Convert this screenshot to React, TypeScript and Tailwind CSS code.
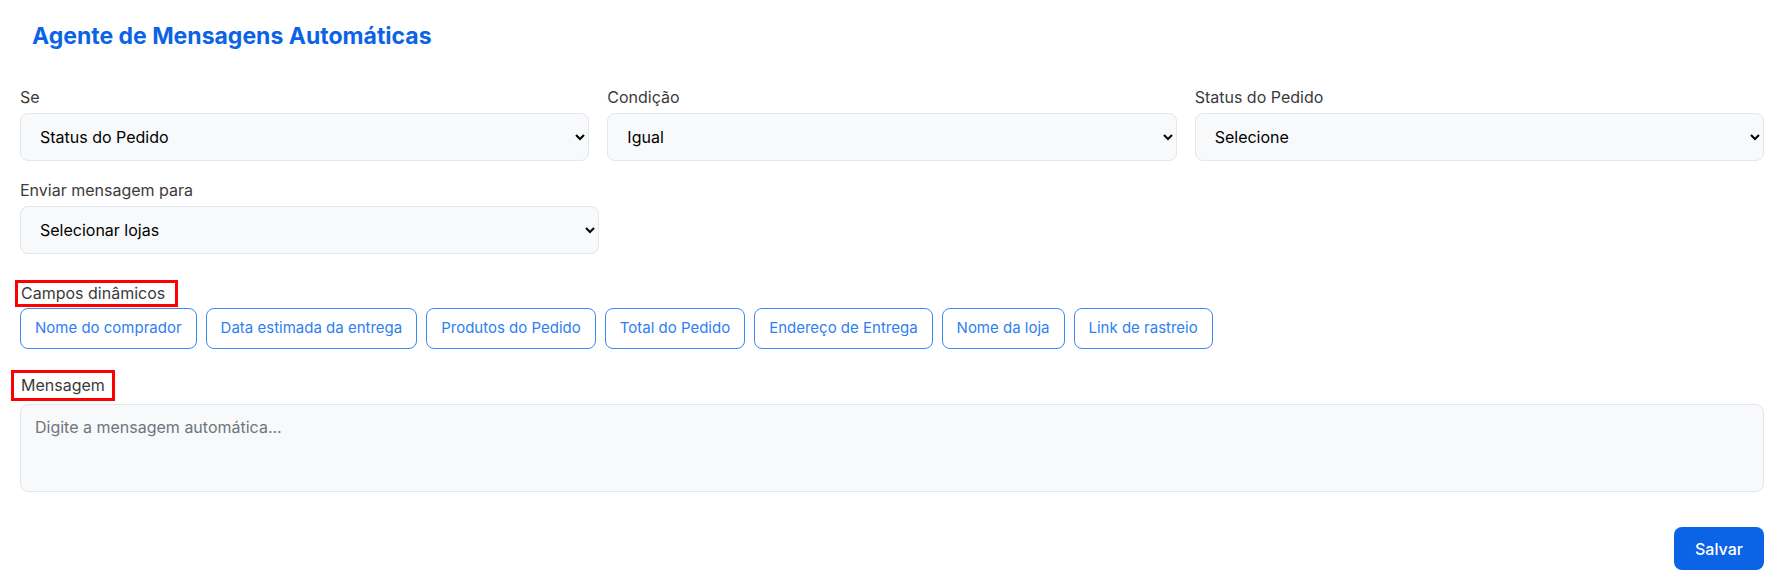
import { useState } from "react";

const campos = [
  "Nome do comprador",
  "Data estimada da entrega",
  "Produtos do Pedido",
  "Total do Pedido",
  "Endereço de Entrega",
  "Nome da loja",
  "Link de rastreio",
];

function Field({ label, children }: { label: string; children: React.ReactNode }) {
  return (
    <div className="flex flex-col">
      <label className="mb-1 text-base leading-6 text-[#3b3b3b]">{label}</label>
      {children}
    </div>
  );
}

const selectCls =
  "h-12 w-full rounded-lg border border-[#e3e6ea] bg-[#f8f9fa] pl-[15px] pr-1 text-base text-black outline-none";

export default function App() {
  const [mensagem, setMensagem] = useState("");

  return (
    <div
      className="min-h-[586px] bg-white pb-[17px] pl-5 pr-[18px] pt-5"
      style={{ fontFamily: "Inter, 'Noto Sans', sans-serif" }}
    >
      <h1 className="pl-3 text-[23px] font-bold leading-8 text-[#0b63e5]">
        Agente de Mensagens Automáticas
      </h1>

      <div className="mt-[33px] grid grid-cols-3 gap-x-[18px]">
        <Field label="Se">
          <select className={selectCls} defaultValue="status">
            <option value="status">Status do Pedido</option>
          </select>
        </Field>
        <Field label="Condição">
          <select className={selectCls} defaultValue="igual">
            <option value="igual">Igual</option>
            <option value="diferente">Diferente</option>
          </select>
        </Field>
        <Field label="Status do Pedido">
          <select className={selectCls} defaultValue="">
            <option value="">Selecione</option>
          </select>
        </Field>
      </div>

      <div className="mt-[17px] w-[579px]">
        <Field label="Enviar mensagem para">
          <select className={selectCls} defaultValue="">
            <option value="">Selecionar lojas</option>
          </select>
        </Field>
      </div>

      <div className="mt-[26px]">
        <span className="-ml-[5px] inline-block border-[3px] border-[#ff0000] pl-[3px] pr-[10px] text-base leading-[21px] text-[#3b3b3b]">
          Campos dinâmicos
        </span>
      </div>
      <div className="mt-px flex flex-wrap gap-[9px]">
        {campos.map((c) => (
          <button
            key={c}
            type="button"
            className="h-[41px] rounded-lg border border-[#3a8af5] bg-white px-[14px] text-[15px] text-[#2f7ff0]"
            onClick={() => setMensagem((m) => m + `{${c}}`)}
          >
            {c}
          </button>
        ))}
      </div>

      <div className="mt-[21px]">
        <span className="-ml-[9px] inline-block border-[3px] border-[#ff0000] px-[7px] text-base leading-[25px] text-[#3b3b3b]">
          Mensagem
        </span>
      </div>
      <textarea
        value={mensagem}
        onChange={(e) => setMensagem(e.target.value)}
        placeholder="Digite a mensagem automática..."
        className="mt-[3px] block h-[88px] w-full resize-none rounded-lg border border-[#e3e6ea] bg-[#f8f9fa] px-[14px] py-[10px] text-base text-black outline-none placeholder:text-[#6f757c]"
      />

      <div className="mt-[35px] flex justify-end">
        <button
          type="button"
          className="h-[43px] w-[90px] rounded-lg bg-[#0b63e5] text-base font-medium text-white"
        >
          Salvar
        </button>
      </div>
    </div>
  );
}
